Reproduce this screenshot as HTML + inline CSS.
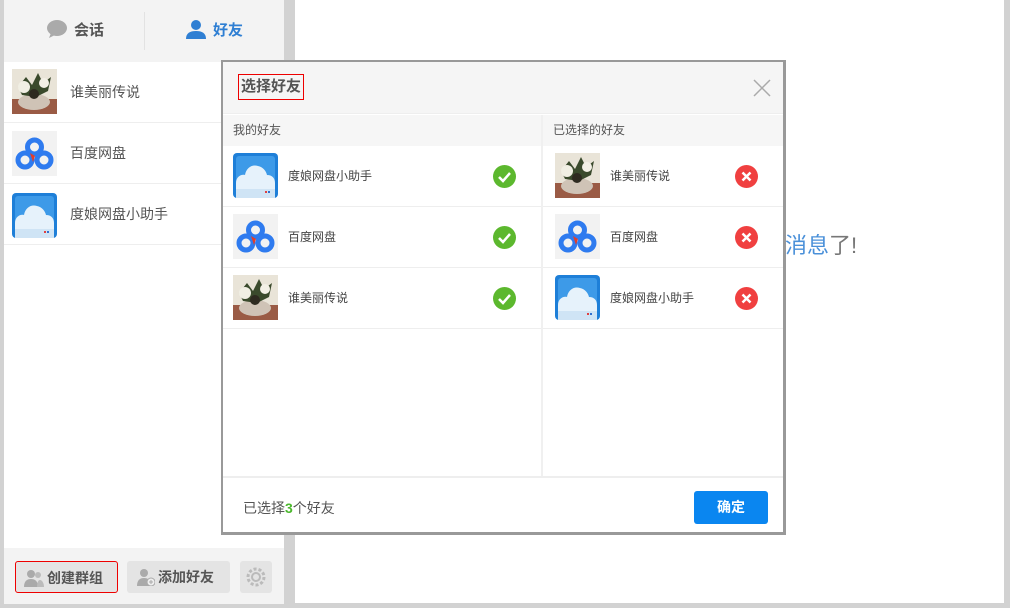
<!DOCTYPE html>
<html><head><meta charset="utf-8"><style>
*{margin:0;padding:0;box-sizing:border-box}
body{width:1010px;height:608px;background:#d2d2d2;font-family:"Liberation Sans","Noto Sans CJK SC",sans-serif;position:relative;overflow:hidden;color:#444}
.abs{position:absolute}
.left{left:4px;top:0;width:280px;height:604px;background:#fff}
.tabs{left:0;top:0;width:280px;height:62px;background:#f3f3f3}
.tab{top:0;height:62px;line-height:62px;font-size:15px;font-weight:bold}
.item{left:0;width:280px;height:61px;border-bottom:1px solid #eee}
.item .t{left:66px;top:0;line-height:61px;font-size:14px;color:#555}
.av{width:45px;height:45px;overflow:hidden}
.bottom{left:0;top:548px;width:280px;height:56px;background:#f3f3f3}
.btn{top:13px;height:32px;background:#e4e4e4;border-radius:3px;font-size:14px;font-weight:bold;color:#555;line-height:32px}
.btn svg{vertical-align:-4px;margin-right:3px}
.right{left:295px;top:0;width:709px;height:603px;background:#fff}
.dlg{left:221px;top:60px;width:565px;height:475px;background:#fff;border:2px solid #999;border-right-width:3px;border-bottom-width:3px}
.dh{left:0;top:0;width:560px;height:52px;background:#f5f5f5;border-bottom:1px solid #eee}
.ch{top:53px;height:31px;background:#f6f6f6;font-size:12px;line-height:31px;color:#555;padding-left:10px}
.row{height:61px;border-bottom:1px solid #eee}
.row .t{left:65px;line-height:61px;font-size:12px;color:#444}
.ok{width:23px;height:23px;border-radius:50%;background:#5cb82e;top:19px}
.no{width:23px;height:23px;border-radius:50%;background:#f04040;top:19px}
</style></head><body>
<svg width="0" height="0" style="position:absolute"><defs>
<symbol id="flower" viewBox="0 0 45 45"><rect width="45" height="45" fill="#e9e4d8"/><rect y="30" width="45" height="15" fill="#9a5b45"/><ellipse cx="22" cy="33" rx="16" ry="8" fill="#cfc3b6"/><path d="M6 18l8-10 6 8 6-12 5 10 8-6-3 14-12 6-14-2z" fill="#3a4a2c"/><circle cx="12" cy="18" r="6" fill="#f1efe4"/><circle cx="32" cy="14" r="5" fill="#f3f0e6"/><circle cx="22" cy="25" r="5" fill="#2e2a20"/></symbol>
<symbol id="baidu" viewBox="0 0 45 45"><rect width="45" height="45" fill="#f2f2f2"/><g fill="none" stroke="#2f7bef" stroke-width="5"><circle cx="22.5" cy="16" r="7"/><circle cx="13" cy="29" r="7"/><circle cx="32" cy="29" r="7"/></g><path d="M18 22l5 3-2 6z" fill="#e23d2a"/></symbol>
<symbol id="cloud" viewBox="0 0 45 45"><rect width="45" height="45" rx="4" fill="#1e7fd8"/><rect x="3" y="3" width="39" height="39" rx="3" fill="#3d9ae8"/><path d="M3 40V30c0-6 5-9 9-8 1-7 7-11 13-9 5 1 8 5 9 9 5 0 8 3 8 8v10z" fill="#e6f2fb"/><rect x="3" y="36" width="39" height="9" fill="#cfe4f5"/><rect x="32" y="38" width="2" height="2" fill="#e04040"/><rect x="35" y="38" width="2" height="2" fill="#3070d0"/></symbol>
</defs></svg>

<div class="abs left">
  <div class="abs tabs">
    <div class="abs" style="left:140px;top:12px;width:1px;height:38px;background:#e2e2e2"></div>
    <div class="abs tab" style="left:42px;color:#555"><svg width="22" height="20" style="vertical-align:-4px;margin-right:6px" viewBox="0 0 22 20"><ellipse cx="11" cy="9" rx="10" ry="8" fill="#aaa"/><path d="M5 14l-2 5 6-3z" fill="#aaa"/></svg>会话</div>
    <div class="abs tab" style="left:181px;color:#2f7fd3"><svg width="22" height="20" style="vertical-align:-4px;margin-right:6px" viewBox="0 0 22 20"><circle cx="11" cy="6" r="5" fill="#2f7fd3"/><path d="M1 20c0-6 4-8 10-8s10 2 10 8z" fill="#2f7fd3"/></svg>好友</div>
  </div>
  <div class="abs item" style="top:62px"><svg class="abs av" style="left:8px;top:7px"><use href="#flower"/></svg><div class="abs t">谁美丽传说</div></div>
  <div class="abs item" style="top:123px"><svg class="abs av" style="left:8px;top:8px"><use href="#baidu"/></svg><div class="abs t">百度网盘</div></div>
  <div class="abs item" style="top:184px"><svg class="abs av" style="left:8px;top:9px"><use href="#cloud"/></svg><div class="abs t">度娘网盘小助手</div></div>
  <div class="abs bottom">
    <div class="abs btn" style="left:11px;width:103px;border:1px solid #e00;padding-left:8px"><svg width="20" height="18" viewBox="0 0 20 18"><circle cx="7" cy="5" r="4" fill="#aaa"/><path d="M0 18c0-6 3-8 7-8s7 2 7 8z" fill="#aaa"/><circle cx="14" cy="6" r="3" fill="#bbb"/><path d="M13 18c0-4 1-7 3-7s4 3 4 7z" fill="#bbb"/></svg>创建群组</div>
    <div class="abs btn" style="left:123px;width:103px;padding-left:10px"><svg width="18" height="18" viewBox="0 0 18 18"><circle cx="7" cy="5" r="4" fill="#aaa"/><path d="M0 18c0-6 3-8 7-8s7 2 7 8z" fill="#aaa"/><circle cx="14" cy="14" r="4" fill="#eee" stroke="#aaa"/><path d="M14 12v4M12 14h4" stroke="#aaa"/></svg>添加好友</div>
    <div class="abs btn" style="left:236px;width:32px;text-align:center"><svg width="22" height="22" viewBox="0 0 22 22" style="margin:5px 0 0"><circle cx="11" cy="11" r="8" fill="none" stroke="#bbb" stroke-width="3" stroke-dasharray="3 2"/><circle cx="11" cy="11" r="4" fill="none" stroke="#bbb" stroke-width="2"/></svg></div>
  </div>
</div>

<div class="abs right">
  <div class="abs" style="left:490px;top:228px;font-size:22px;color:#4a90d9">消息<span style="color:#777">了!</span></div>
</div>

<div class="abs dlg">
  <div class="abs dh">
    <div class="abs" style="left:15px;top:12px;height:26px;padding:0 2px;border:1px solid #e00;font-size:15px;font-weight:bold;line-height:24px;color:#555">选择好友</div>
    <svg class="abs" style="left:530px;top:17px" width="18" height="18" viewBox="0 0 18 18"><path d="M1 1L17 17M17 1L1 17" stroke="#aaa" stroke-width="1.5"/></svg>
  </div>
  <div class="abs ch" style="left:0;width:318px">我的好友</div>
  <div class="abs ch" style="left:320px;width:240px">已选择的好友</div>
  <div class="abs" style="left:318px;top:53px;width:2px;height:362px;background:#f0f0f0"></div>
  <div class="abs" style="left:0;top:84px;width:318px">
    <div class="abs row" style="top:0;width:318px"><svg class="abs av" style="left:10px;top:7px"><use href="#cloud"/></svg><div class="abs t">度娘网盘小助手</div><div class="abs ok" style="left:270px"><svg width="23" height="23"><path d="M6 12l4 4 7-8" stroke="#fff" stroke-width="2.5" fill="none"/></svg></div></div>
    <div class="abs row" style="top:61px;width:318px"><svg class="abs av" style="left:10px;top:7px"><use href="#baidu"/></svg><div class="abs t">百度网盘</div><div class="abs ok" style="left:270px"><svg width="23" height="23"><path d="M6 12l4 4 7-8" stroke="#fff" stroke-width="2.5" fill="none"/></svg></div></div>
    <div class="abs row" style="top:122px;width:318px"><svg class="abs av" style="left:10px;top:7px"><use href="#flower"/></svg><div class="abs t">谁美丽传说</div><div class="abs ok" style="left:270px"><svg width="23" height="23"><path d="M6 12l4 4 7-8" stroke="#fff" stroke-width="2.5" fill="none"/></svg></div></div>
  </div>
  <div class="abs" style="left:320px;top:84px;width:240px">
    <div class="abs row" style="top:0;width:240px"><svg class="abs av" style="left:12px;top:7px"><use href="#flower"/></svg><div class="abs t" style="left:67px">谁美丽传说</div><div class="abs no" style="left:192px"><svg width="23" height="23"><path d="M7.5 7.5l8 8M15.5 7.5l-8 8" stroke="#fff" stroke-width="2.5"/></svg></div></div>
    <div class="abs row" style="top:61px;width:240px"><svg class="abs av" style="left:12px;top:7px"><use href="#baidu"/></svg><div class="abs t" style="left:67px">百度网盘</div><div class="abs no" style="left:192px"><svg width="23" height="23"><path d="M7.5 7.5l8 8M15.5 7.5l-8 8" stroke="#fff" stroke-width="2.5"/></svg></div></div>
    <div class="abs row" style="top:122px;width:240px"><svg class="abs av" style="left:12px;top:7px"><use href="#cloud"/></svg><div class="abs t" style="left:67px">度娘网盘小助手</div><div class="abs no" style="left:192px"><svg width="23" height="23"><path d="M7.5 7.5l8 8M15.5 7.5l-8 8" stroke="#fff" stroke-width="2.5"/></svg></div></div>
  </div>
  <div class="abs" style="left:0;top:414px;width:560px;height:2px;background:#eee"></div>
  <div class="abs" style="left:20px;top:436px;font-size:14px;color:#555">已选择<b style="color:#4cb82e">3</b>个好友</div>
  <div class="abs" style="left:471px;top:429px;width:74px;height:33px;background:#0a86f0;border-radius:3px;color:#fff;font-weight:bold;font-size:14px;text-align:center;line-height:33px">确定</div>
</div>
</body></html>
